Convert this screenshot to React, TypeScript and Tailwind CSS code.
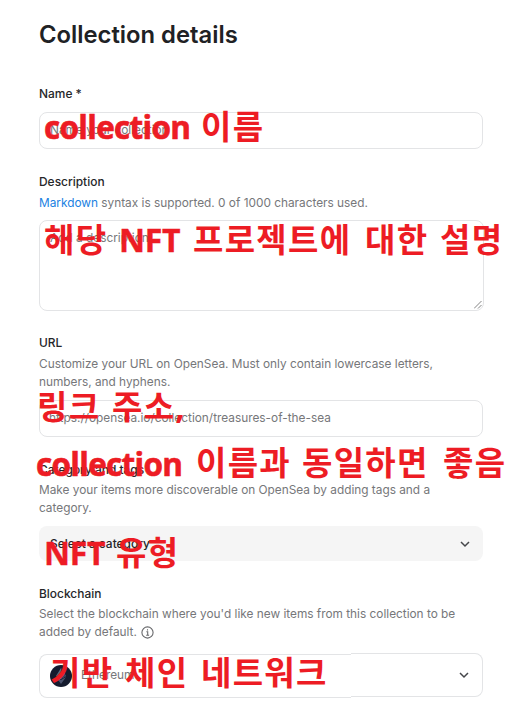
import type { ReactNode } from "react";

function Label({ children }: { children: ReactNode }) {
  return <div className="h-5 text-[11.95px] font-medium leading-5 text-[#252629]">{children}</div>;
}

function Hint({ children }: { children: ReactNode }) {
  return <div className="whitespace-nowrap text-[11.83px] leading-[18px] text-[#76777a]">{children}</div>;
}

function Chevron() {
  return (
    <svg className="h-[10px] w-[10px]" viewBox="0 0 10 10" fill="none" stroke="#45464a" strokeWidth="1.5">
      <path d="M1 3l4 4 4-4" />
    </svg>
  );
}

const korean = "text-[33px] font-bold leading-[40px] tracking-[1.3px]";
const latin = "text-[31.5px] font-bold leading-[40px] tracking-[-0.7px] [-webkit-text-stroke:0.6px_#ed1c24]";
const capitals = "text-[32px] font-bold leading-[40px] tracking-[-0.3px] [-webkit-text-stroke:0.4px_#ed1c24]";

const notes = [
  { text: "collection", style: `${latin} left-[44px] top-[107px]` },
  { text: "이름", style: `${korean} left-[201px] top-[107px]` },
  { text: "해당", style: `${korean} left-[44px] top-[220px]` },
  { text: "NFT", style: `${capitals} left-[119px] top-[220px]` },
  { text: "프로젝트에", style: `${korean} left-[193px] top-[220px]` },
  { text: "대한", style: `${korean} left-[365px] top-[220px]` },
  { text: "설명", style: `${korean} left-[440px] top-[220px]` },
  { text: "링크", style: `${korean} left-[37px] top-[387px]` },
  { text: "주소,", style: `${korean} left-[112px] top-[387px]` },
  { text: "collection", style: `${latin} left-[36px] top-[444px]` },
  { text: "이름과", style: `${korean} left-[196px] top-[443px]` },
  { text: "동일하면", style: `${korean} left-[302px] top-[443px]` },
  { text: "좋음", style: `${korean} left-[443px] top-[443px]` },
  { text: "NFT", style: `${capitals} left-[44px] top-[533px]` },
  { text: "유형", style: `${korean} left-[116px] top-[533px]` },
  { text: "기반", style: `${korean} left-[50px] top-[653px]` },
  { text: "체인", style: `${korean} left-[125px] top-[653px]` },
  { text: "네트워크", style: `${korean} left-[201px] top-[653px]` },
];

export default function App() {
  return (
    <main className="relative h-[706px] w-[507px] overflow-hidden bg-white pl-[39px] pr-[24px] font-['Inter','Noto_Sans_CJK_KR',sans-serif]">
      <h1 className="pt-[19px] text-[23.8px] font-semibold leading-8 text-[#202124]">Collection details</h1>

      <section className="pt-[33px]">
        <Label>Name *</Label>
        <div className="mt-2 flex h-[37px] items-center rounded-[8px] border border-[#e3e4e6] pl-[10px] text-[11.85px] text-[#76777a]">
          Name your collection
        </div>
      </section>

      <section className="pt-[23px]">
        <Label>Description</Label>
        <div className="mt-[2px]">
          <Hint>
            <span className="text-[#2081e2]">Markdown</span> syntax is supported. 0 of 1000 characters used.
          </Hint>
        </div>
        <div className="mt-[8px] flex h-[91px] w-[445px] items-start justify-between rounded-[8px] border border-[#e3e4e6] pl-[10px] pt-[7px] text-[11.85px] leading-5 text-[#76777a]">
          Add a description
          <svg className="mb-[1px] mr-[1px] h-2 w-2 self-end" viewBox="0 0 8 8" stroke="#777" strokeWidth="0.9">
            <path d="M0 7.5L7.5 0M4 7.5L7.5 4" />
          </svg>
        </div>
      </section>

      <section className="pt-[22px]">
        <Label>URL</Label>
        <div className="mt-[2px]">
          <Hint>
            Customize your URL on OpenSea. Must only contain lowercase letters,
            <br />
            numbers, and hyphens.
          </Hint>
        </div>
        <div className="mt-[9px] flex h-[37px] items-center rounded-[8px] border border-[#e3e4e6] pl-[9px] text-[11.85px] text-[#76777a]">
          https://opensea.io/collection/treasures-of-the-sea
        </div>
      </section>

      <section className="pt-[23px]">
        <Label>Category and tags</Label>
        <div className="mt-[1px]">
          <Hint>
            Make your items more discoverable on OpenSea by adding tags and a
            <br />
            category.
          </Hint>
        </div>
        <div className="mt-[9px] flex h-[35px] items-center justify-between rounded-[8px] bg-[#f5f5f5] pl-[11px] pr-[13px] text-[11.95px] font-medium text-[#252629]">
          Select a category
          <Chevron />
        </div>
      </section>

      <section className="pt-[23px]">
        <Label>Blockchain</Label>
        <div className="mt-[1px]">
          <Hint>
            Select the blockchain where you'd like new items from this collection to be
            <br />
            <span className="flex items-center gap-[4px]">
              added by default.
              <svg className="h-[13px] w-[13px]" viewBox="0 0 13 13" fill="none" stroke="#68696c" strokeWidth="1.1">
                <circle cx="6.5" cy="6.5" r="5.6" />
                <path d="M5.4 5.8h1.3v3.4M5.2 9.2h2.9M6.5 3.3v1.2" />
              </svg>
            </span>
          </Hint>
        </div>
        <div className="mt-[12px] flex text-[11.85px] text-[#76777a]">
          <div className="mt-px flex h-[44px] w-[312px] items-center rounded-l-[8px] border border-r-0 border-[#e3e4e6] pl-[10px]">
            <svg className="mr-[9px] h-[22px] w-[22px]" viewBox="0 0 22 22">
              <circle cx="11" cy="11" r="11" fill="#151b2e" />
              <path d="M11 3l-5 8 5 3 5-3z" fill="#626b86" />
              <path d="M11 3v11l5-3z" fill="#343d59" />
              <path d="M6 12l5 7 5-7-5 3z" fill="#4a536e" />
            </svg>
            Ethereum
          </div>
          <div className="flex h-[44px] flex-1 items-center justify-end rounded-r-[8px] border border-l-0 border-[#e3e4e6] pr-[13px]">
            <Chevron />
          </div>
        </div>
      </section>

      {notes.map((note, index) => (
        <span
          key={index}
          className={`absolute whitespace-nowrap font-['Open_Sans','Noto_Sans_CJK_KR',sans-serif] text-[#ed1c24] ${note.style}`}
        >
          {note.text}
        </span>
      ))}
    </main>
  );
}
